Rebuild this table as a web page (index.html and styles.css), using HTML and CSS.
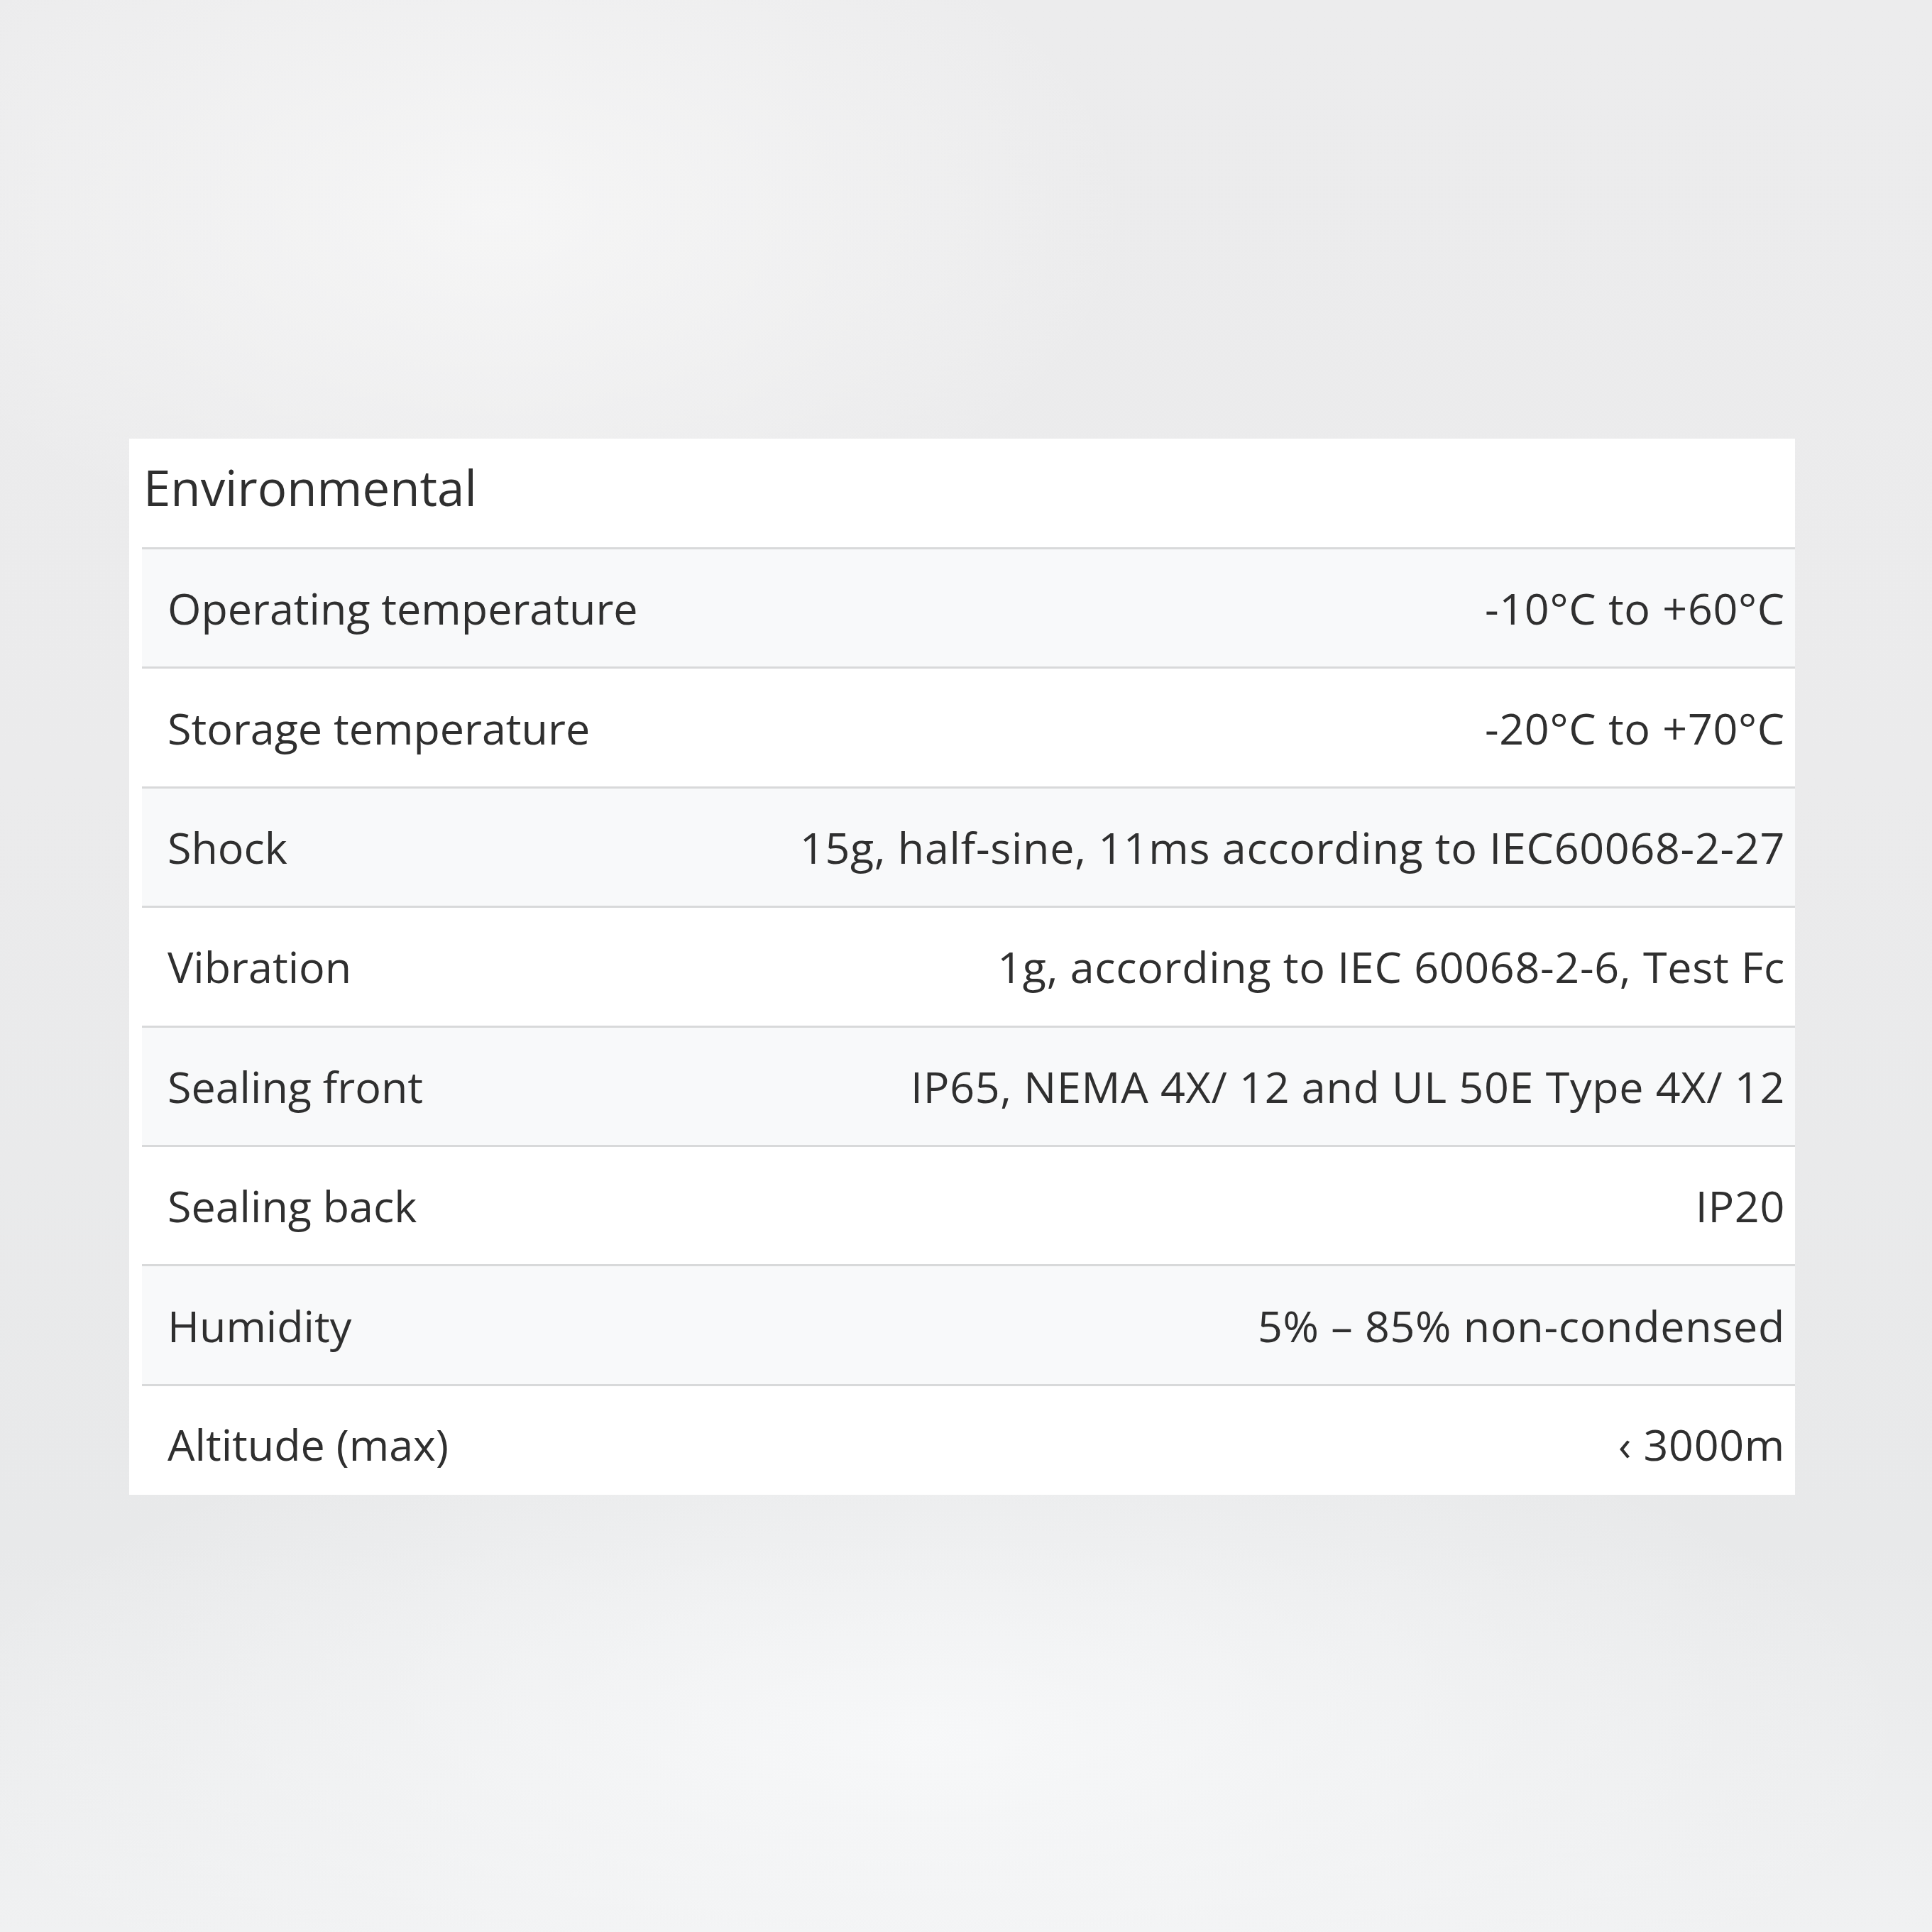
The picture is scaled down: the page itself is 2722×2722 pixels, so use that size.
FILE: index.html
```html
<!DOCTYPE html>
<html lang="en">
<head>
<meta charset="utf-8">
<title>Environmental</title>
<link rel="stylesheet" href="styles.css">
</head>
<body>
<main class="page">
  <section class="card">
    <h2 class="card-title">Environmental</h2>
    <div class="rows">
      <div class="row"><span class="label">Operating temperature</span><span class="value">-10°C to +60°C</span></div>
      <div class="row"><span class="label">Storage temperature</span><span class="value">-20°C to +70°C</span></div>
      <div class="row"><span class="label">Shock</span><span class="value">15g, half-sine, 11ms according to IEC60068-2-27</span></div>
      <div class="row"><span class="label">Vibration</span><span class="value">1g, according to IEC 60068-2-6, Test Fc</span></div>
      <div class="row"><span class="label">Sealing front</span><span class="value">IP65, NEMA 4X/ 12 and UL 50E Type 4X/ 12</span></div>
      <div class="row"><span class="label">Sealing back</span><span class="value">IP20</span></div>
      <div class="row"><span class="label">Humidity</span><span class="value">5% – 85% non-condensed</span></div>
      <div class="row"><span class="label">Altitude (max)</span><span class="value">‹ 3000m</span></div>
    </div>
  </section>
</main>
</body>
</html>
```

FILE: styles.css
```css
html, body {
  margin: 0;
  padding: 0;
}

body {
  width: 2722px;
  height: 2722px;
  overflow: hidden;
  font-family: "Open Sans", "Noto Sans", sans-serif;
  color: #2f2f2f;
  background:
    radial-gradient(ellipse 900px 500px at 700px 300px, rgba(248,248,248,0.8), rgba(248,248,248,0) 100%),
    radial-gradient(ellipse 1400px 500px at 1300px 2450px, rgba(248,249,250,0.9), rgba(248,249,250,0) 100%),
    linear-gradient(180deg, #ececed 0%, #ebebec 40%, #e8e9ea 80%, #f0f1f2 100%);
}

.page {
  padding-top: 618px;
  padding-left: 182px;
}

.card {
  width: 2347px;
  background: #ffffff;
}

.card-title {
  margin: 0;
  height: 153px;
  padding-left: 20px;
  padding-bottom: 17px;
  box-sizing: border-box;
  display: flex;
  align-items: center;
  font-size: 69px;
  font-weight: 400;
}

.rows {
  margin-left: 18px;
}

.row {
  display: flex;
  justify-content: space-between;
  align-items: center;
  height: 165.4px;
  border-top: 3px solid #d8d9da;
  padding: 0 14px 0 36px;
  font-size: 61px;
  line-height: 1;
}

.row:nth-child(odd) {
  background: #f8f9fa;
}

.row:last-child {
  height: 156px;
  padding-top: 10px;
  box-sizing: border-box;
}

.label,
.value {
  white-space: nowrap;
}

.value {
  letter-spacing: 0.7px;
}
```
